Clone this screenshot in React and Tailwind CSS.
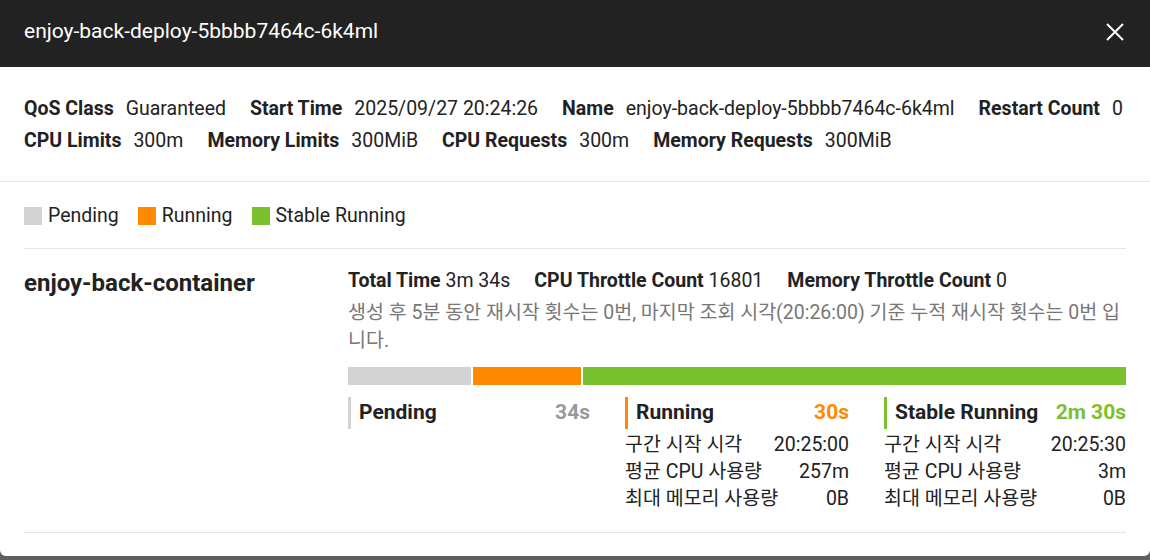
import React from 'react';

const phases = [
    { name: 'Pending', time: '34s', secs: 34, bar: 'bg-[#d3d3d3]', border: 'border-[#d3d3d3]', text: 'text-[#999999]', rows: [] },
    {
        name: 'Running', time: '30s', secs: 30, bar: 'bg-[#ff8a00]', border: 'border-[#ff8a00]', text: 'text-[#ff8a00]',
        rows: [['구간 시작 시각', '20:25:00'], ['평균 CPU 사용량', '257m'], ['최대 메모리 사용량', '0B']]
    },
    {
        name: 'Stable Running', time: '2m 30s', secs: 150, bar: 'bg-[#7bc12f]', border: 'border-[#7bc12f]', text: 'text-[#7bc12f]',
        rows: [['구간 시작 시각', '20:25:30'], ['평균 CPU 사용량', '3m'], ['최대 메모리 사용량', '0B']]
    }
];

const Field = ({ label, value }) => (
    <div className="flex items-center mr-6 whitespace-nowrap">
        <span className="font-bold mr-3">{label}</span>
        <span>{value}</span>
    </div>
);

const App = () => {
    return (
        <div className="h-[560px] w-[1150px] bg-[#5f5f5f] overflow-hidden font-['Roboto','Noto_Sans_CJK_KR',sans-serif] text-[#222222]">
            <div className="h-[556px] bg-white rounded-b-md overflow-hidden">
                {/* Header */}
                <div className="h-[67px] bg-[#222222] flex items-center justify-between pl-6 pr-[26px] pb-[3px]">
                    <h1 className="text-[21px] text-white">enjoy-back-deploy-5bbbb7464c-6k4ml</h1>
                    <svg width="18" height="18" viewBox="0 0 18 18" className="text-white">
                        <path d="M1 1L17 17M17 1L1 17" stroke="currentColor" strokeWidth="2" />
                    </svg>
                </div>

                {/* Pod info */}
                <div className="px-6 pt-[26px] pb-[24px] border-b border-[#e6e6e6] text-[19.5px] leading-8">
                    <div className="flex">
                        <Field label="QoS Class" value="Guaranteed" />
                        <Field label="Start Time" value="2025/09/27 20:24:26" />
                        <Field label="Name" value="enjoy-back-deploy-5bbbb7464c-6k4ml" />
                        <Field label="Restart Count" value="0" />
                    </div>
                    <div className="flex">
                        <Field label="CPU Limits" value="300m" />
                        <Field label="Memory Limits" value="300MiB" />
                        <Field label="CPU Requests" value="300m" />
                        <Field label="Memory Requests" value="300MiB" />
                    </div>
                </div>

                <div className="px-6">
                    {/* Legend */}
                    <div className="flex items-center gap-[19px] pt-[22px] pb-[20px] border-b border-[#e6e6e6] text-[19.5px] leading-6">
                        {phases.map((p) => (
                            <div key={p.name} className="flex items-center gap-[6px]">
                                <span className={`w-[18px] h-[18px] ${p.bar}`} />
                                <span>{p.name}</span>
                            </div>
                        ))}
                    </div>

                    {/* Container */}
                    <div className="flex pt-[18px] pb-5 border-b border-[#e6e6e6]">
                        <div className="w-[324px] shrink-0 pt-[2px]">
                            <h2 className="text-[24px] font-bold leading-7">enjoy-back-container</h2>
                        </div>
                        <div className="flex-1">
                            <div className="flex text-[19.5px] leading-7 whitespace-nowrap">
                                <div className="mr-6"><span className="font-bold">Total Time</span> 3m 34s</div>
                                <div className="mr-6"><span className="font-bold">CPU Throttle Count</span> 16801</div>
                                <div><span className="font-bold">Memory Throttle Count</span> 0</div>
                            </div>
                            <p className="mt-1 text-[19.5px] leading-7 text-[#777777]">
                                생성 후 5분 동안 재시작 횟수는 0번, 마지막 조회 시각(20:26:00) 기준 누적 재시작 횟수는 0번 입니다.
                            </p>

                            <div className="mt-3 flex gap-[2px] h-[18px]">
                                {phases.map((p) => (
                                    <div key={p.name} className={p.bar} style={{ flexGrow: p.secs, flexBasis: 0 }} />
                                ))}
                            </div>

                            <div className="mt-3 flex justify-between">
                                {phases.map((p, i) => (
                                    <div key={p.name} className={i === 1 ? 'w-[224px]' : 'w-[242px]'}>
                                        <div className={`flex items-center justify-between h-8 border-l-[3px] ${p.border} pl-[8px] text-[21px] font-bold`}>
                                            <span>{p.name}</span>
                                            <span className={p.text}>{p.time}</span>
                                        </div>
                                        <div className="mt-[2px] text-[19.5px] leading-[27px] text-[#222222]">
                                            {p.rows.map(([k, v]) => (
                                                <div key={k} className="flex justify-between whitespace-nowrap">
                                                    <span>{k}</span>
                                                    <span>{v}</span>
                                                </div>
                                            ))}
                                        </div>
                                    </div>
                                ))}
                            </div>
                        </div>
                    </div>
                </div>
            </div>
        </div>
    );
};

export default App;
